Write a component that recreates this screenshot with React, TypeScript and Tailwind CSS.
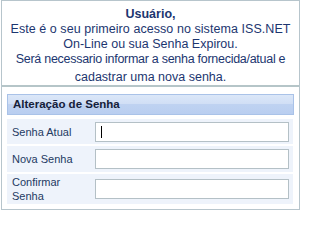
export default function App() {
  const rows = [
    { label: "Senha Atual", h: "h-[25px]", caret: true },
    { label: "Nova Senha", h: "h-[26px]", caret: false },
    { label: "Confirmar Senha", h: "h-[30px]", caret: false },
  ];

  return (
    <div className="w-[303px] h-[211px] bg-white">
      <div className="ml-[1px] w-[299px] h-[210px] border border-[#b7c5cc] bg-white flex flex-col">
        {/* Mensagem */}
        <div
          className="h-[84px] pt-[6px] text-center text-[12.5px] leading-[15px] text-[#1c3670] whitespace-nowrap"
          style={{ fontFamily: '"Liberation Sans", Arial, sans-serif' }}
        >
          <p className="font-bold">Usuário,</p>
          <p className="tracking-[0.06px]">Este é o seu primeiro acesso no sistema ISS.NET</p>
          <p>On-Line ou sua Senha Expirou.</p>
          <p className="tracking-[-0.28px]">Será necessario informar a senha fornecida/atual e</p>
          <p className="mt-[3px]">cadastrar uma nova senha.</p>
        </div>
        <div className="h-[2px] bg-[#b5c5c8]" />

        {/* Formulário */}
        <div
          className="px-[5px] pt-[7px]"
          style={{ fontFamily: '"Liberation Sans", Arial, sans-serif' }}
        >
          <div className="h-[21px] border border-[#a9c2e8] bg-[linear-gradient(#dbe7f8_0%,#d0def5_50%,#bfd2f1_50%,#b9cef0_100%)] flex items-center pl-[5px] text-[11.5px] font-bold text-[#15203a]">
            Alteração de Senha
          </div>
          <div className="mt-[4px] flex flex-col gap-[2px] pr-[1px]">
            {rows.map((r) => (
              <div key={r.label} className={`${r.h} bg-[#eef3fb] flex items-center`}>
                <span className="w-[88px] pl-[5px] pr-[20px] text-[11px] leading-[14px] text-[#233a62]">
                  {r.label}
                </span>
                <div className="w-[194px] h-[20px] border border-[#b4c0c6] bg-white flex items-center pl-[5px]">
                  {r.caret && <span className="w-[1px] h-[12px] bg-black" />}
                </div>
              </div>
            ))}
          </div>
        </div>
      </div>
    </div>
  );
}
